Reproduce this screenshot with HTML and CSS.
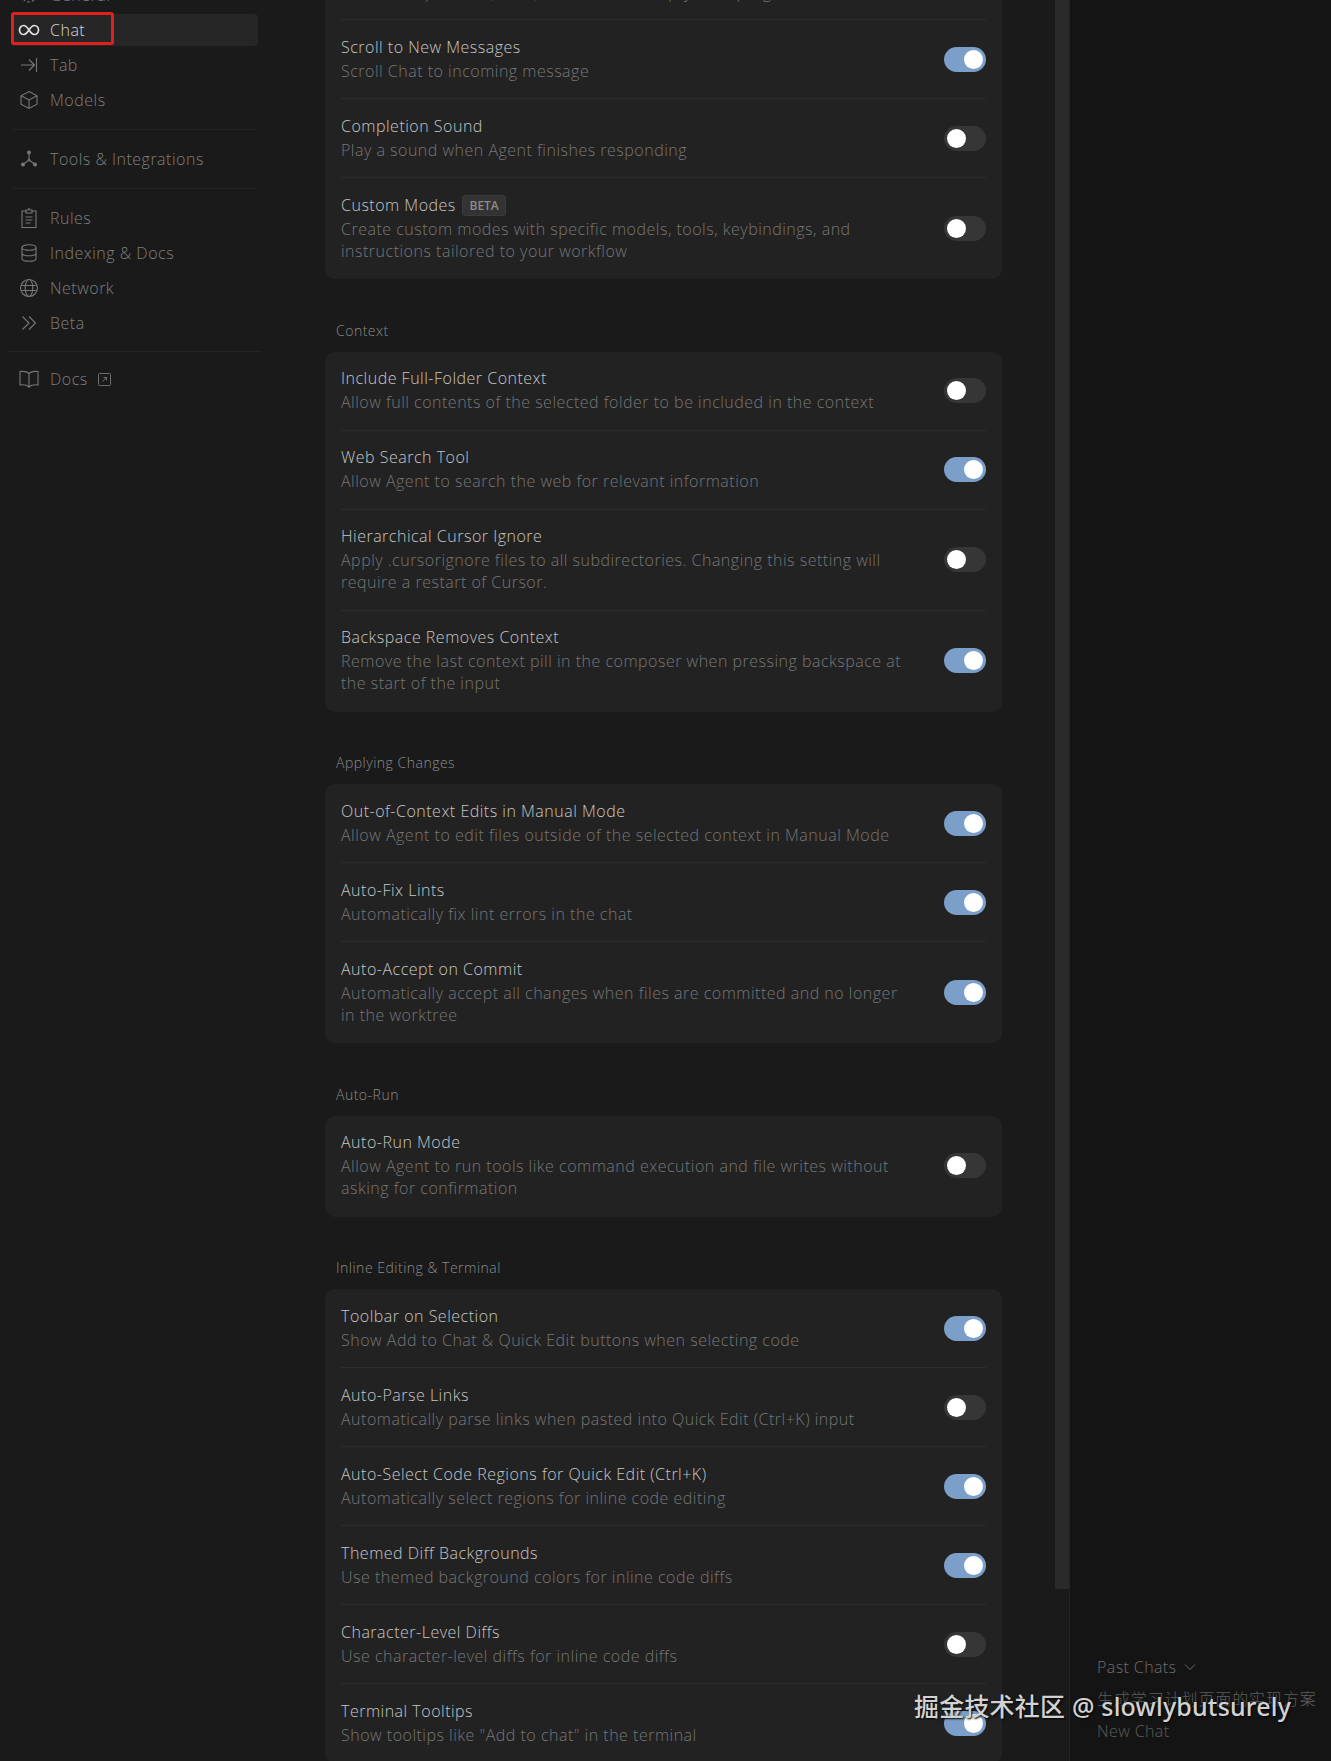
FILE: index.html
```html
<!DOCTYPE html>
<html lang="en">

<head>
    <meta charset="UTF-8">
    <title>Cursor Settings</title>
    <link rel="stylesheet" href="styles.css">
</head>

<body>
    <div class="side">
        <ul class="nav nav-first">
            <li class="item">
                <svg class="ico" viewBox="0 0 18 18"><circle cx="9" cy="9" r="3"/><circle cx="9" cy="9" r="7" stroke-dasharray="3 2"/></svg>
                General
            </li>
            <li class="item active">
                <svg class="ico ico-chat" viewBox="0 0 22 18"><path d="M11 9C9 6 7.500 4.500 5.800 4.500 3.200 4.500 1.500 6.500 1.500 9s1.700 4.500 4.300 4.500C7.500 13.500 9 12 11 9c2-3 3.500-4.500 5.200-4.500 2.600 0 4.300 2 4.300 4.500s-1.700 4.500-4.300 4.500C14.500 13.500 13 12 11 9z"/></svg>
                Chat
            </li>
            <li class="item">
                <svg class="ico" viewBox="0 0 18 18"><path d="M1 9h13M9 3.500 14.500 9 9 14.500M16.500 2v14"/></svg>
                Tab
            </li>
            <li class="item">
                <svg class="ico" viewBox="0 0 18 18"><path d="M9 .5 17 4.800v8.400L9 17.500l-8-4.300V4.800zM1 4.800 9 9l8-4.200M9 9v8.500"/></svg>
                Models
            </li>
        </ul>
        <div class="sep"></div>
        <ul class="nav">
            <li class="item">
                <svg class="ico" viewBox="0 0 18 18"><path d="M9 3v7M9 10l-5.500 4M9 10l5.500 4"/><circle class="dot" cx="9" cy="2.500" r="2"/><circle class="dot" cx="3" cy="14.500" r="2"/><circle class="dot" cx="15" cy="14.500" r="2"/><circle class="dot" cx="9" cy="10" r="1.300"/></svg>
                Tools &amp; Integrations
            </li>
        </ul>
        <div class="sep"></div>
        <ul class="nav">
            <li class="item">
                <svg class="ico" viewBox="0 0 18 18"><path d="M6 2H2v16.500h14V2h-4M6 1h2l1-1.500L10 1h2v3H6zM5.500 8h7M5.500 11h7M5.500 14h5"/></svg>
                Rules
            </li>
            <li class="item">
                <svg class="ico" viewBox="0 0 18 18"><ellipse cx="9" cy="3.500" rx="7" ry="2.800"/><path d="M2 3.500v11c0 1.500 3.100 2.800 7 2.800s7-1.300 7-2.800v-11M2 9c0 1.500 3.100 2.800 7 2.800s7-1.300 7-2.800"/></svg>
                Indexing &amp; Docs
            </li>
            <li class="item">
                <svg class="ico" viewBox="0 0 18 18"><circle cx="9" cy="9" r="8.500"/><ellipse cx="9" cy="9" rx="3.800" ry="8.500"/><path d="M1.500 6.500h15M1.500 11.500h15"/></svg>
                Network
            </li>
            <li class="item">
                <svg class="ico" viewBox="0 0 18 18"><path d="M2.500 2.500 9 9l-6.500 6.500M9 2.500 15.500 9 9 15.500"/></svg>
                Beta
            </li>
        </ul>
        <div class="sep sep-wide"></div>
        <ul class="nav">
            <li class="item">
                <svg class="ico ico-book" viewBox="0 0 20 18"><path d="M10 3.500C8.500 2 5 1 1 1.500V15c3.500-.5 7 0 9 2 2-2 5.500-2.500 9-2V1.500C15 1 11.500 2 10 3.500zM10 3.500V17"/></svg>
                Docs
                <svg class="ext" viewBox="0 0 13 13"><rect x="0.500" y="0.500" width="12" height="12" rx="1"/><path d="M4.500 8.500l4-4M5.500 4.500h3v3"/></svg>
            </li>
        </ul>
    </div>

    <div class="main">
        <div class="card card-first">
            <div class="row">
                <div class="txt">
                    <div class="name">Hide Chat Input</div>
                    <div class="desc">Hide the input box (Ctrl+I) when chat is empty or in progress</div>
                </div>
                <span class="sw"></span>
            </div>
            <div class="row">
                <div class="txt">
                    <div class="name">Scroll to New Messages</div>
                    <div class="desc">Scroll Chat to incoming message</div>
                </div>
                <span class="sw on"></span>
            </div>
            <div class="row">
                <div class="txt">
                    <div class="name">Completion Sound</div>
                    <div class="desc">Play a sound when Agent finishes responding</div>
                </div>
                <span class="sw"></span>
            </div>
            <div class="row">
                <div class="txt">
                    <div class="name">Custom Modes <span class="tag">BETA</span></div>
                    <div class="desc">Create custom modes with specific models, tools, keybindings, and instructions tailored to your workflow</div>
                </div>
                <span class="sw"></span>
            </div>
        </div>

        <h3 class="head">Context</h3>
        <div class="card">
            <div class="row">
                <div class="txt">
                    <div class="name">Include Full-Folder Context</div>
                    <div class="desc">Allow full contents of the selected folder to be included in the context</div>
                </div>
                <span class="sw"></span>
            </div>
            <div class="row">
                <div class="txt">
                    <div class="name">Web Search Tool</div>
                    <div class="desc">Allow Agent to search the web for relevant information</div>
                </div>
                <span class="sw on"></span>
            </div>
            <div class="row">
                <div class="txt">
                    <div class="name">Hierarchical Cursor Ignore</div>
                    <div class="desc">Apply .cursorignore files to all subdirectories. Changing this setting will require a restart of Cursor.</div>
                </div>
                <span class="sw"></span>
            </div>
            <div class="row">
                <div class="txt">
                    <div class="name">Backspace Removes Context</div>
                    <div class="desc">Remove the last context pill in the composer when pressing backspace at the start of the input</div>
                </div>
                <span class="sw on"></span>
            </div>
        </div>

        <h3 class="head">Applying Changes</h3>
        <div class="card">
            <div class="row">
                <div class="txt">
                    <div class="name">Out-of-Context Edits in Manual Mode</div>
                    <div class="desc">Allow Agent to edit files outside of the selected context in Manual Mode</div>
                </div>
                <span class="sw on"></span>
            </div>
            <div class="row">
                <div class="txt">
                    <div class="name">Auto-Fix Lints</div>
                    <div class="desc">Automatically fix lint errors in the chat</div>
                </div>
                <span class="sw on"></span>
            </div>
            <div class="row">
                <div class="txt">
                    <div class="name">Auto-Accept on Commit</div>
                    <div class="desc">Automatically accept all changes when files are committed and no longer in the worktree</div>
                </div>
                <span class="sw on"></span>
            </div>
        </div>

        <h3 class="head">Auto-Run</h3>
        <div class="card">
            <div class="row">
                <div class="txt">
                    <div class="name">Auto-Run Mode</div>
                    <div class="desc">Allow Agent to run tools like command execution and file writes without asking for confirmation</div>
                </div>
                <span class="sw"></span>
            </div>
        </div>

        <h3 class="head">Inline Editing &amp; Terminal</h3>
        <div class="card">
            <div class="row">
                <div class="txt">
                    <div class="name">Toolbar on Selection</div>
                    <div class="desc">Show Add to Chat &amp; Quick Edit buttons when selecting code</div>
                </div>
                <span class="sw on"></span>
            </div>
            <div class="row">
                <div class="txt">
                    <div class="name">Auto-Parse Links</div>
                    <div class="desc">Automatically parse links when pasted into Quick Edit (Ctrl+K) input</div>
                </div>
                <span class="sw"></span>
            </div>
            <div class="row">
                <div class="txt">
                    <div class="name">Auto-Select Code Regions for Quick Edit (Ctrl+K)</div>
                    <div class="desc">Automatically select regions for inline code editing</div>
                </div>
                <span class="sw on"></span>
            </div>
            <div class="row">
                <div class="txt">
                    <div class="name">Themed Diff Backgrounds</div>
                    <div class="desc">Use themed background colors for inline code diffs</div>
                </div>
                <span class="sw on"></span>
            </div>
            <div class="row">
                <div class="txt">
                    <div class="name">Character-Level Diffs</div>
                    <div class="desc">Use character-level diffs for inline code diffs</div>
                </div>
                <span class="sw"></span>
            </div>
            <div class="row">
                <div class="txt">
                    <div class="name">Terminal Tooltips</div>
                    <div class="desc">Show tooltips like "Add to chat" in the terminal</div>
                </div>
                <span class="sw on"></span>
            </div>
        </div>
    </div>

    <div class="track"><div class="thumb"></div></div>

    <div class="right">
        <div class="past">
            Past Chats
            <svg class="chev" viewBox="0 0 12 12"><path d="M1 3.500l5 5 5-5"/></svg>
        </div>
        <div class="chat-line chat-cn">生成学习计划页面的实现方案</div>
        <div class="chat-line">New Chat</div>
    </div>

    <div class="mark"></div>
    <div class="wm">掘金技术社区 @ slowlybutsurely</div>
</body>

</html>
```

FILE: styles.css
```css
* {
    margin: 0;
    padding: 0;
    list-style: none;
    box-sizing: border-box;
}

html,
body {
    height: 1761px;
    overflow: hidden;
}

body {
    display: flex;
    position: relative;
    background: #1a1a1a;
    font: 300 16px/22px "Open Sans", "Noto Sans CJK SC", sans-serif;
    color: #7c7c7c;
}

/* left menu */
.side {
    width: 270px;
    flex: none;
    padding: 0 12px 0 11px;
}

.nav {
    display: flex;
    flex-direction: column;
    gap: 3px;
}

.nav-first {
    margin-top: -21px;
}

.item {
    display: flex;
    align-items: center;
    gap: 12px;
    height: 32px;
    padding-left: 9px;
    border-radius: 4px;
    font-size: 16px;
    letter-spacing: 0.5px;
    color: #7e7e7e;
}

.item.active {
    background: #262626;
    color: #d6d6d6;
}

.ico {
    width: 18px;
    height: 18px;
    flex: none;
    fill: none;
    overflow: visible;
    stroke: #787878;
    stroke-width: 1.1;
}

.ico .dot {
    fill: #787878;
    stroke: none;
}

.ico-chat {
    width: 22px;
    margin: 0 -2px;
    stroke: #e2e2e2;
    stroke-width: 1.700;
}

.ico-book {
    width: 20px;
    margin: 0 -1px;
}

.ext {
    width: 13px;
    height: 13px;
    fill: none;
    stroke: #6c6c6c;
    margin-left: -2px;
}

.sep {
    height: 1px;
    margin: 13px 2px;
    background: #242424;
}

.sep-wide {
    margin: 12px -3px 11px;
}

/* settings list */
.main {
    width: 785px;
    flex: none;
    padding: 0 53px 0 55px;
}

.card {
    background: #222222;
    border-radius: 10px;
    padding: 0 16px;
}

.card-first {
    margin-top: -59px;
}

.row {
    display: flex;
    align-items: center;
    justify-content: space-between;
    gap: 40px;
    padding: 15.500px 0;
    border-bottom: 1px solid #2d2d2d;
}

.card .row:last-child {
    border-bottom-color: transparent;
}

.txt {
    flex: 1;
    margin-bottom: 1px;
}

.name {
    color: #c6c6c6;
    letter-spacing: 0.5px;
    margin-bottom: 2px;
}

.desc {
    color: #767676;
    letter-spacing: 0.5px;
}

.tag {
    display: inline-block;
    margin-left: 2px;
    padding: 0 6px;
    border-radius: 3px;
    background: #333333;
    border: 1px solid #3a3a3a;
    font-size: 12px;
    line-height: 19px;
    font-weight: 600;
    letter-spacing: 0;
    color: #8c8c8c;
    vertical-align: 1px;
}

.sw {
    width: 42px;
    height: 25px;
    flex: none;
    position: relative;
    border-radius: 13px;
    background: #363636;
}

.sw::after {
    content: "";
    position: absolute;
    top: 3px;
    left: 3px;
    width: 19px;
    height: 19px;
    border-radius: 50%;
    background: #ffffff;
}

.sw.on {
    background: #7b9fc8;
}

.sw.on::after {
    left: 20px;
}

.head {
    margin: 40.600px 0 10px 11px;
    font-size: 14px;
    line-height: 22px;
    font-weight: 300;
    letter-spacing: 0.5px;
    color: #8a8a8a;
}

/* scrollbar */
.track {
    width: 15px;
    flex: none;
    border-right: 1px solid #252525;
}

.thumb {
    height: 1589px;
    background: #2a2a2a;
}

/* right panel */
.right {
    flex: 1;
    background: #141414;
    padding: 0 0 19px 27px;
    display: flex;
    flex-direction: column;
    justify-content: flex-end;
    gap: 10px;
    color: #5c5c5c;
    letter-spacing: 0.4px;
    font-size: 16px;
}

.chat-cn {
    letter-spacing: 0.9px;
}

.past {
    display: flex;
    align-items: center;
    gap: 8px;
    color: #6e6e6e;
}

.chev {
    width: 12px;
    height: 12px;
    fill: none;
    stroke: #6e6e6e;
}

/* over the picture */
.mark {
    position: absolute;
    left: 11px;
    top: 12px;
    width: 103px;
    height: 33px;
    border: 3px solid #e0201c;
    border-radius: 3px;
}

.wm {
    position: absolute;
    left: 914px;
    top: 1688px;
    font: 500 25px/36px "Noto Sans", "Noto Sans CJK SC", sans-serif;
    letter-spacing: 0.2px;
    color: #d2d2d2;
    text-shadow: 1px 1px 2px #000000;
    white-space: nowrap;
}
```
